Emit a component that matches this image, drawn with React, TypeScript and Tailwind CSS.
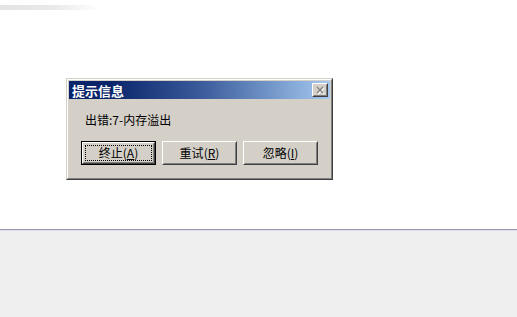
import React from "react";

const font = { fontFamily: '"Noto Sans CJK SC", "DejaVu Sans", sans-serif' };

function Btn({ label, hot, focused }: { label: string; hot: string; focused?: boolean }) {
  const inner = (
    <div className="w-full h-full border border-t-white border-l-white border-b-[#404040] border-r-[#404040] bg-[#d4d0c8]">
      <div className="w-full h-full border border-t-[#d4d0c8] border-l-[#d4d0c8] border-b-[#808080] border-r-[#808080] flex items-center justify-center p-[1px]">
        <div
          className={
            "w-full h-full flex items-center justify-center text-[12px] leading-[14px] text-black " +
            (focused ? "border border-dotted border-black" : "")
          }
        >
          <span>
            {label}(<span className="underline">{hot}</span>)
          </span>
        </div>
      </div>
    </div>
  );
  return (
    <div className={"w-[75px] h-[24px] " + (focused ? "border border-black" : "")}>{inner}</div>
  );
}

export default function App() {
  return (
    <div className="w-[517px] h-[317px] bg-white flex flex-col overflow-hidden" style={font}>
      <div className="h-[229px] shrink-0 flex flex-col">
        <div className="mt-[5px] h-[5px] w-[100px] bg-linear-to-r from-[#e4e4e4] via-[#e8e8e8] to-white" />
        <div className="ml-[66px] mt-[68px] w-[267px] h-[102px] border border-t-[#d4d0c8] border-l-[#d4d0c8] border-b-[#404040] border-r-[#404040]">
          <div className="w-full h-full border border-t-white border-l-white border-b-[#808080] border-r-[#808080] bg-[#d4d0c8] p-[1px] flex flex-col">
            <div className="h-[18px] shrink-0 bg-linear-to-r from-[#0a246a] from-15% via-[#3a5a9a] via-50% to-[#a6caf0] flex items-center justify-between pl-[3px] pr-[2px]">
              <span className="text-white font-bold text-[13px] leading-[15px]">提示信息</span>
              <div className="w-[16px] h-[14px] border border-t-white border-l-white border-b-[#404040] border-r-[#404040] bg-[#d4d0c8]">
                <div className="w-full h-full border border-t-[#d4d0c8] border-l-[#d4d0c8] border-b-[#808080] border-r-[#808080] flex items-center justify-center">
                  <svg width="10" height="9" viewBox="0 0 10 9">
                    <path d="M3 2 L9 8 M9 2 L3 8" stroke="#ffffff" strokeWidth="1.4" />
                    <path d="M2 1 L8 7 M8 1 L2 7" stroke="#808080" strokeWidth="1.4" />
                  </svg>
                </div>
              </div>
            </div>
            <div className="pl-[16px] mt-[13px] text-[12px] leading-[16px] text-black">出错:7-内存溢出</div>
            <div className="pl-[12px] mt-[13px] flex gap-[6px]">
              <Btn label="终止" hot="A" focused />
              <Btn label="重试" hot="R" />
              <Btn label="忽略" hot="I" />
            </div>
          </div>
        </div>
      </div>
      <div className="h-[1px] bg-[#9c9ab8] shrink-0" />
      <div className="h-[1px] bg-[#dcdcea] shrink-0" />
      <div className="flex-1 bg-[#efefef]" />
    </div>
  );
}
